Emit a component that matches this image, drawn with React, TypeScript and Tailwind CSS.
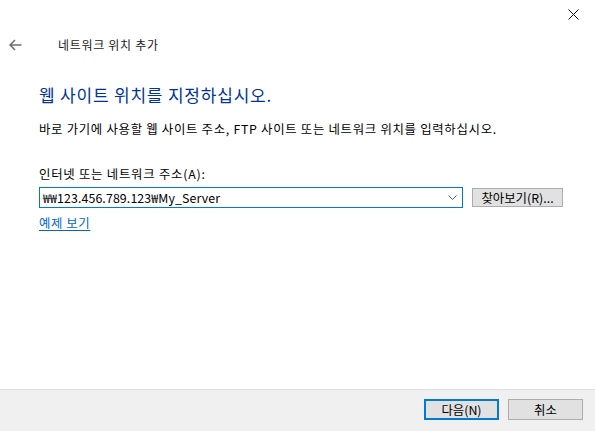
import React from "react";

const font = { fontFamily: '"Noto Sans CJK KR", "Noto Sans", sans-serif' };

export default function App() {
  return (
    <div
      className="w-[595px] h-[431px] flex flex-col bg-white text-black overflow-hidden"
      style={font}
    >
      {/* top bar with close */}
      <div className="h-[30px] flex justify-end items-start">
        <div className="w-[46px] h-[29px] flex items-center justify-center mr-[-1px]">
          <svg width="11" height="11" viewBox="0 0 11 11">
            <path d="M0.5 0.5 L10.5 10.5 M10.5 0.5 L0.5 10.5" stroke="#111" strokeWidth="1" fill="none" />
          </svg>
        </div>
      </div>

      {/* header row */}
      <div className="h-[30px] flex items-center">
        <div className="w-[58px] pl-[9px] flex items-center">
          <svg width="13" height="12" viewBox="0 0 13 12">
            <path d="M1 6 H12.5 M6 1 L1 6 L6 11" stroke="#6e6e6e" strokeWidth="1.5" fill="none" />
          </svg>
        </div>
        <span className="text-[12px] leading-[16px] tracking-[0.7px] text-[#1a1a1a]">네트워크 위치 추가</span>
      </div>

      {/* content */}
      <div className="pl-[39px] flex flex-col">
        <div className="mt-[23px] text-[17px] leading-[24px] tracking-[0.8px] text-[#003399]">
          웹 사이트 위치를 지정하십시오.
        </div>
        <div className="mt-[14px] text-[12.4px] leading-[16px] tracking-[0.7px]">
          바로 가기에 사용할 웹 사이트 주소, FTP 사이트 또는 네트워크 위치를 입력하십시오.
        </div>
        <div className="mt-[29px] text-[12.4px] leading-[16px] tracking-[0.75px]">인터넷 또는 네트워크 주소(A):</div>
        <div className="mt-[5px] flex items-start">
          <div className="w-[424px] h-[21px] border border-[#0078d7] flex items-center justify-between pl-[3px] pr-[5px]">
            <span className="text-[12.4px] leading-[16px] tracking-[0.1px]">₩₩123.456.789.123₩My_Server</span>
            <svg width="9" height="6" viewBox="0 0 9 6">
              <path d="M0.5 0.5 L4.5 4.5 L8.5 0.5" stroke="#5a5a5a" strokeWidth="1" fill="none" />
            </svg>
          </div>
          <div className="ml-[9px] mt-[1px] w-[91px] h-[19px] bg-[#e1e1e1] border border-[#adadad] flex items-center justify-center text-[12.4px] leading-[16px]">
            찾아보기(R)...
          </div>
        </div>
        <div className="mt-[7px] text-[12.4px] leading-[16px] tracking-[0.6px] text-[#0066cc] underline underline-offset-2">
          <span>예제 보기</span>
        </div>
      </div>

      <div className="flex-1" />

      {/* footer */}
      <div className="h-[42px] bg-[#f0f0f0] border-t border-[#dfdfdf] flex justify-end items-start pt-[9px] pr-[12px] gap-[9px]">
        <div className="w-[75px] h-[21px] bg-[#e1e1e1] border-2 border-[#0078d7] flex items-center justify-center text-[12.4px] leading-[16px]">
          다음(N)
        </div>
        <div className="w-[75px] h-[21px] bg-[#e1e1e1] border border-[#adadad] flex items-center justify-center text-[12.4px] leading-[16px]">
          취소
        </div>
      </div>
    </div>
  );
}
